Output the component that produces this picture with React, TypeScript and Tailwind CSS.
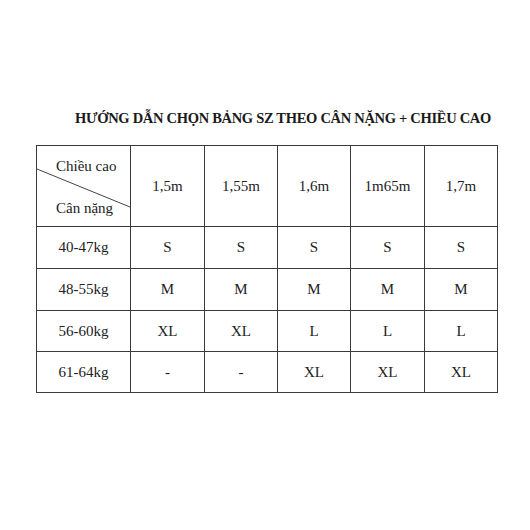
import React from "react";

const heights = ["1,5m", "1,55m", "1,6m", "1m65m", "1,7m"];
const rows: [string, string[]][] = [
  ["40-47kg", ["S", "S", "S", "S", "S"]],
  ["48-55kg", ["M", "M", "M", "M", "M"]],
  ["56-60kg", ["XL", "XL", "L", "L", "L"]],
  ["61-64kg", ["-", "-", "XL", "XL", "XL"]],
];

export default function App() {
  return (
    <div
      className="w-[530px] h-[530px] bg-white text-[#222]"
      style={{ fontFamily: '"Liberation Serif", "Times New Roman", serif' }}
    >
      <div className="pt-[108px] pl-[75px] h-[145px]">
        <div className="text-[14.5px] tracking-[-0.3px] font-bold leading-[20px] text-[#1a1a1a] whitespace-nowrap">
          HƯỚNG DẪN CHỌN BẢNG SZ THEO CÂN NẶNG + CHIỀU CAO
        </div>
      </div>
      <div className="ml-[36px] w-[462px] grid grid-cols-[93px_73px_72px_72px_73px_72px] grid-rows-[80px_41px_41px_40px_40px] gap-px p-px bg-[#3a3a3a] text-[15px]">
        <div className="relative bg-white">
          <svg className="absolute inset-0" width="93" height="80" viewBox="0 0 93 80">
            <line x1="0" y1="23" x2="93" y2="61" stroke="#444" strokeWidth="1" />
          </svg>
          <div className="absolute left-[19px] top-[11px] leading-[18px]">Chiều cao</div>
          <div className="absolute left-[19px] top-[53px] leading-[18px]">Cân nặng</div>
        </div>
        {heights.map((h) => (
          <div key={h} className="bg-white flex items-center justify-center">
            {h}
          </div>
        ))}
        {rows.map(([w, sizes]) => (
          <React.Fragment key={w}>
            <div className="bg-white flex items-center justify-center">{w}</div>
            {sizes.map((s, i) => (
              <div key={i} className="bg-white flex items-center justify-center">
                {s}
              </div>
            ))}
          </React.Fragment>
        ))}
      </div>
    </div>
  );
}
